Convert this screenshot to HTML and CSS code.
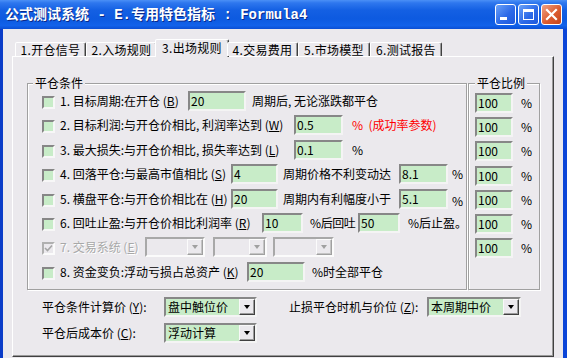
FILE: index.html
```html
<!DOCTYPE html>
<html lang="zh-CN">
<head>
<meta charset="utf-8">
<title>公式测试系统</title>
<link rel="stylesheet" href="styles.css">
</head>
<body>
<div class="window">
  <div class="titlebar">
    <span class="title">公式测试系统 - E.专用特色指标 : Formula4</span>
    <div class="cbtns">
      <span class="cbtn"><svg width="19" height="19" viewBox="0 0 19 19"><rect x="4" y="12" width="7" height="3" fill="#fff"/></svg></span>
      <span class="cbtn"><svg width="19" height="19" viewBox="0 0 19 19"><rect x="4.5" y="4.5" width="10" height="10" fill="none" stroke="#fff"/><rect x="4" y="4" width="11" height="3" fill="#fff"/></svg></span>
      <span class="cbtn close"><svg width="19" height="19" viewBox="0 0 19 19"><path d="M5 5 L14 14 M14 5 L5 14" stroke="#fff" stroke-width="2.2" stroke-linecap="square"/></svg></span>
    </div>
  </div>
  <div class="client">
    <div class="tabs">
      <span class="tab w71">1.开仓信号</span>
      <span class="tab w71">2.入场规则</span>
      <span class="tab active">3.出场规则</span>
      <span class="tab w71">4.交易费用</span>
      <span class="tab w72">5.市场模型</span>
      <span class="tab w72">6.测试报告</span>
    </div>
    <div class="panel">
      <div class="groups">
        <div class="group cond">
          <span class="legend">平仓条件</span>
          <div class="rows">
            <div class="row">
              <span class="cb"></span>
              <span class="lbl w128">1. 目标周期:在开仓 (<u>B</u>)</span>
              <span class="in w58">20</span>
              <span class="ml6">周期后, 无论涨跌都平仓</span>
            </div>
            <div class="row">
              <span class="cb"></span>
              <span class="lbl w234">2. 目标利润:与开仓价相比, 利润率达到 (<u>W</u>)</span>
              <span class="in w49">0.5</span>
              <span class="ml9 red">%&nbsp; (成功率参数)</span>
            </div>
            <div class="row">
              <span class="cb"></span>
              <span class="lbl w234">3. 最大损失:与开仓价相比, 损失率达到 (<u>L</u>)</span>
              <span class="in w49">0.1</span>
              <span class="ml9">%</span>
            </div>
            <div class="row">
              <span class="cb"></span>
              <span class="lbl w171">4. 回落平仓:与最高市值相比 (<u>S</u>)</span>
              <span class="in w47">4</span>
              <span class="lbl ml5 w116">周期价格不利变动达</span>
              <span class="in w49">8.1</span>
              <span class="ml4">%</span>
            </div>
            <div class="row">
              <span class="cb"></span>
              <span class="lbl w171">5. 横盘平仓:与开仓价相比在 (<u>H</u>)</span>
              <span class="in w47">20</span>
              <span class="lbl ml5 w116">周期内有利幅度小于</span>
              <span class="in w49">5.1</span>
              <span class="ml4 low">%</span>
            </div>
            <div class="row">
              <span class="cb"></span>
              <span class="lbl w202">6. 回吐止盈:与开仓价相比利润率 (<u>R</u>)</span>
              <span class="in w41">10</span>
              <span class="lbl ml7 w48 tight">%后回吐</span>
              <span class="in w42">50</span>
              <span class="ml8">%后止盈。</span>
            </div>
            <div class="row">
              <span class="cb disabled"><svg width="9" height="9" viewBox="0 0 9 9"><path d="M1 4 L3.5 6.5 L8 1.5" fill="none" stroke="#a5a5a5" stroke-width="1.6"/></svg></span>
              <span class="lbl w85 dis">7. 交易系统 (<u>E</u>)</span>
              <span class="combo off w60"><span class="arr"></span></span>
              <span class="combo off ml8 w54"><span class="arr"></span></span>
              <span class="combo off ml6 w61"><span class="arr"></span></span>
            </div>
            <div class="row">
              <span class="cb"></span>
              <span class="lbl w187">8. 资金变负:浮动亏损占总资产 (<u>K</u>)</span>
              <span class="in w58">20</span>
              <span class="ml7">%时全部平仓</span>
            </div>
          </div>
        </div>
        <div class="group ratio">
          <span class="legend">平仓比例</span>
          <div class="rows">
            <div class="row"><span class="in w38">100</span><span class="ml8">%</span></div>
            <div class="row"><span class="in w38">100</span><span class="ml8">%</span></div>
            <div class="row"><span class="in w38">100</span><span class="ml8">%</span></div>
            <div class="row"><span class="in w38">100</span><span class="ml8">%</span></div>
            <div class="row"><span class="in w38">100</span><span class="ml8">%</span></div>
            <div class="row"><span class="in w38">100</span><span class="ml8">%</span></div>
            <div class="row"><span class="in w38">100</span><span class="ml8">%</span></div>
          </div>
        </div>
      </div>
      <div class="bottom">
        <div class="brow">
          <span class="lbl w122">平仓条件计算价 (<u>Y</u>):</span>
          <span class="combo w93">盘中触位价<span class="arr"></span></span>
          <span class="lbl ml32 w138">止损平仓时机与价位 (<u>Z</u>):</span>
          <span class="combo w94">本周期中价<span class="arr"></span></span>
        </div>
        <div class="brow">
          <span class="lbl w122">平仓后成本价 (<u>C</u>):</span>
          <span class="combo w93">浮动计算<span class="arr"></span></span>
        </div>
      </div>
    </div>
  </div>
</div>
</body>
</html>
```

FILE: styles.css
```css
* { box-sizing: border-box; margin: 0; padding: 0; }
html, body { width: 567px; height: 358px; overflow: hidden; }
body {
  background: #ebe9ed;
  font-family: "Noto Sans CJK SC", "Noto Sans", sans-serif;
  font-size: 12px;
  line-height: 14px;
  color: #000;
}
u { text-decoration: underline; text-underline-offset: 1px; }

.window { width: 567px; height: 358px; display: flex; flex-direction: column; }

.titlebar {
  flex: none;
  height: 29px;
  display: flex;
  align-items: center;
  padding: 0 5px;
  background: linear-gradient(#4b90f6 0%, #2e77ee 10%, #1460e3 35%, #0d5ae0 65%, #1262ea 88%, #0b4fd4 100%);
}
.title {
  font-family: "Liberation Mono", "Noto Sans CJK SC", monospace;
  font-weight: bold;
  font-size: 14px;
  line-height: 18px;
  color: #fff;
  text-shadow: 1px 1px 0 #0a2a8a;
  white-space: pre;
}
.cbtns { margin-left: auto; display: flex; gap: 2px; }
.cbtn {
  width: 21px; height: 21px;
  border: 1px solid #fff;
  border-radius: 3px;
  background: linear-gradient(135deg, #6ba2f8 0%, #2d6ae8 55%, #1d58dd 100%);
  display: flex;
}
.cbtn.close { background: linear-gradient(135deg, #f0a285 0%, #dc5c30 55%, #c4441a 100%); }

.client {
  flex: 1;
  min-height: 0;
  display: flex;
  flex-direction: column;
  border-left: 3px solid #0a3cc8;
  border-right: 4px solid #0b45d8;
  padding: 10px 9px 1px 9px;
}

.tabs {
  flex: none;
  height: 17px;
  display: flex;
  align-items: flex-end;
  padding-left: 3px;
  position: relative;
  z-index: 1;
}
.tab {
  height: 14px;
  display: flex;
  align-items: center;
  justify-content: center;
  border: 1px solid;
  border-bottom: none;
  border-color: #fff #404040 transparent #fff;
  border-radius: 2px 2px 0 0;
  box-shadow: inset -1px 0 #9a9a9a;
  background: #ebe9ed;
  white-space: nowrap;
  letter-spacing: 0.3px;
}
.tab.active { width: 74px; height: 18px; margin: 0 -2px -1px; padding-bottom: 2px; }

.panel {
  flex: 1;
  border: 1px solid;
  border-color: #fff #404040 #404040 #fff;
  box-shadow: inset -1px -1px #9a9a9a;
  padding: 26px 0 0 14px;
  display: flex;
  flex-direction: column;
}

.groups { display: flex; gap: 1px; height: 207px; flex: none; }
.group {
  border: 1px solid #a0a0a0;
  box-shadow: inset 1px 1px #fff, 1px 1px #fff;
  display: flex;
  flex-direction: column;
}
.group.cond { width: 440px; padding-left: 14px; }
.group.ratio { width: 72px; padding-left: 6px; }
.legend {
  align-self: flex-start;
  height: 14px;
  margin-top: -8px;
  padding: 0 2px;
  background: #ebe9ed;
  white-space: nowrap;
}
.cond .legend { margin-left: -9px; }
.rows { display: flex; flex-direction: column; gap: 4.4px; margin-top: 1px; }
.ratio .rows { gap: 4.2px; margin-top: 3px; }
.row { height: 20px; display: flex; align-items: center; white-space: nowrap; }

.cb {
  width: 13px; height: 13px; flex: none;
  border: 2px solid;
  border-color: #868686 #f7f7f7 #f7f7f7 #868686;
  background: #c8ecc8;
  margin-right: 5px;
  margin-top: 3px;
  display: flex;
}
.cb.disabled { background: #ebe9ed; border-color: #b0b0b0 #fbfbfb #fbfbfb #b0b0b0; }

.lbl { flex: none; white-space: nowrap; }
.tight { letter-spacing: -0.4px; }
.in {
  flex: none;
  height: 20px;
  border: 2px solid;
  border-color: #878787 #f4f4f4 #f4f4f4 #878787;
  background: #c8ecc8;
  padding-left: 1px;
  line-height: 16px;
}
.combo {
  flex: none;
  height: 20px;
  display: flex;
  align-items: center;
  border: 2px solid;
  border-color: #878787 #f4f4f4 #f4f4f4 #878787;
  background: #c8ecc8;
  padding-left: 2px;
  white-space: nowrap;
}
.combo.off { background: #ebe9ed; border-color: #a8a8a8 #fbfbfb #fbfbfb #a8a8a8; }
.arr {
  margin-left: auto;
  width: 16px; height: 16px;
  flex: none;
  border: 1px solid;
  border-color: #f8f8f8 #404040 #404040 #f8f8f8;
  box-shadow: inset -1px -1px #9a9a9a;
  background: #ebe9ed;
  display: flex;
  align-items: center;
  justify-content: center;
}
.arr::after {
  content: "";
  border-style: solid;
  border-width: 4px 3.5px 0;
  border-color: #000 transparent transparent;
}
.off .arr { border-color: #fbfbfb #a0a0a0 #a0a0a0 #fbfbfb; box-shadow: inset -1px -1px #c4c4c4; }
.off .arr::after { border-color: #a0a0a0 transparent transparent; }

.red { color: #ff0000; }
.dis { color: #a8a8a8; text-shadow: 1px 1px #fff; }
.low { margin-top: 4px; }

.bottom { display: flex; flex-direction: column; gap: 6px; margin-top: 7px; padding-left: 15px; }
.brow { display: flex; align-items: center; height: 20px; }

.w38 { width: 38px; } .w41 { width: 41px; } .w42 { width: 42px; } .w48 { width: 48px; }
.w47 { width: 47px; } .w49 { width: 49px; } .w54 { width: 54px; } .w58 { width: 58px; }
.w60 { width: 60px; } .w61 { width: 61px; } .w71 { width: 71px; } .w72 { width: 72px; }
.w85 { width: 85px; } .w93 { width: 93px; } .w94 { width: 94px; } .w116 { width: 116px; }
.w122 { width: 122px; } .w128 { width: 128px; } .w138 { width: 138px; } .w171 { width: 171px; }
.w187 { width: 187px; } .w202 { width: 202px; } .w234 { width: 234px; }
.ml4 { margin-left: 4px; } .ml5 { margin-left: 5px; } .ml6 { margin-left: 6px; }
.ml7 { margin-left: 7px; } .ml8 { margin-left: 8px; } .ml9 { margin-left: 9px; }
.ml32 { margin-left: 32px; }
```
